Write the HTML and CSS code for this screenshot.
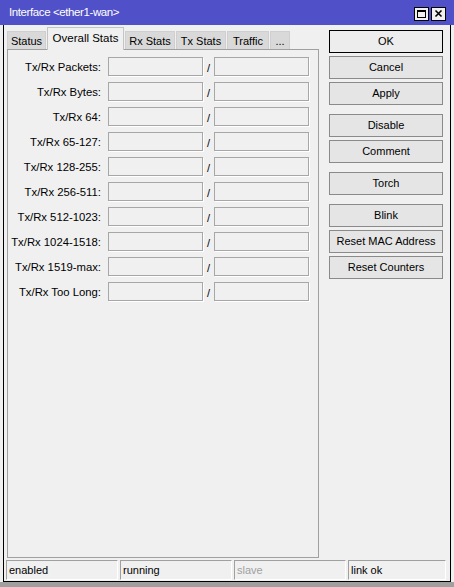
FILE: index.html
```html
<!DOCTYPE html>
<html>
	<head>
		<meta charset="utf-8">
		<title>Interface &lt;ether1-wan&gt;</title>
		<link rel="stylesheet" href="styles.css">
	</head>
	<body>
		<div id="win">
			<div class="titlebar">
				<span class="title">Interface &lt;ether1-wan&gt;</span>
				<div class="tbtns">
					<span class="tbtn">
						<svg width="13" height="12" viewBox="0 0 13 12"><rect x="2.5" y="2.5" width="8" height="7" fill="none" stroke="#000" stroke-width="1"/><rect x="2" y="2" width="9" height="2" fill="#000"/></svg>
					</span>
					<span class="tbtn">
						<svg width="13" height="12" viewBox="0 0 13 12"><path d="M3.5 2.5 L9.5 8.5 M9.5 2.5 L3.5 8.5" stroke="#000" stroke-width="1.6" fill="none"/></svg>
					</span>
				</div>
			</div>
			<div class="frame">
				<div class="main">
					<div class="left">
						<div class="tabs">
							<div class="tab t-status">Status</div>
							<div class="tab t-overall active">Overall Stats</div>
							<div class="tab t-rx">Rx Stats</div>
							<div class="tab t-tx">Tx Stats</div>
							<div class="tab t-traffic">Traffic</div>
							<div class="tab t-more">...</div>
						</div>
						<div class="panel">
							<div class="row"><span class="lbl">Tx/Rx Packets:</span><span class="field"></span><span class="slash">/</span><span class="field"></span></div>
							<div class="row"><span class="lbl">Tx/Rx Bytes:</span><span class="field"></span><span class="slash">/</span><span class="field"></span></div>
							<div class="row"><span class="lbl">Tx/Rx 64:</span><span class="field"></span><span class="slash">/</span><span class="field"></span></div>
							<div class="row"><span class="lbl">Tx/Rx 65-127:</span><span class="field"></span><span class="slash">/</span><span class="field"></span></div>
							<div class="row"><span class="lbl">Tx/Rx 128-255:</span><span class="field"></span><span class="slash">/</span><span class="field"></span></div>
							<div class="row"><span class="lbl">Tx/Rx 256-511:</span><span class="field"></span><span class="slash">/</span><span class="field"></span></div>
							<div class="row"><span class="lbl">Tx/Rx 512-1023:</span><span class="field"></span><span class="slash">/</span><span class="field"></span></div>
							<div class="row"><span class="lbl">Tx/Rx 1024-1518:</span><span class="field"></span><span class="slash">/</span><span class="field"></span></div>
							<div class="row"><span class="lbl">Tx/Rx 1519-max:</span><span class="field"></span><span class="slash">/</span><span class="field"></span></div>
							<div class="row"><span class="lbl">Tx/Rx Too Long:</span><span class="field"></span><span class="slash">/</span><span class="field"></span></div>
						</div>
					</div>
					<div class="buttons">
						<div class="btn default">OK</div>
						<div class="btn">Cancel</div>
						<div class="btn">Apply</div>
						<div class="btn sep">Disable</div>
						<div class="btn">Comment</div>
						<div class="btn sep">Torch</div>
						<div class="btn sep">Blink</div>
						<div class="btn">Reset MAC Address</div>
						<div class="btn">Reset Counters</div>
					</div>
				</div>
				<div class="statusbar">
					<div class="cell">enabled</div>
					<div class="cell">running</div>
					<div class="cell off">slave</div>
					<div class="cell last">link ok</div>
				</div>
			</div>
			<div class="bottom"></div>
		</div>
	</body>
</html>
```

FILE: styles.css
```css
html, body {
	margin: 0;
	padding: 0;
}

body {
	width: 454px;
	height: 587px;
	overflow: hidden;
	background: #f0f0f0;
	font-family: "Liberation Sans", Arial, sans-serif;
	font-size: 11px;
	color: #000;
}

.titlebar {
	height: 25px;
	background: #5050c8;
	display: flex;
	align-items: center;
	justify-content: space-between;
	padding: 0 8px 0 9px;
}

.title {
	color: #fff;
	font-size: 11.5px;
	letter-spacing: -0.4px;
	padding-bottom: 1px;
}

.tbtns {
	display: flex;
	gap: 2px;
	margin-top: 3px;
}

.tbtn {
	width: 13px;
	height: 12px;
	border: 1px solid #000;
	background: #f0f0f0;
	display: flex;
}

.frame {
	margin: 0 3px;
	border-left: 1px solid #000;
	border-right: 1px solid #000;
	border-bottom: 1px solid #000;
	box-sizing: border-box;
	height: 557px;
	padding-top: 2px;
	display: flex;
	flex-direction: column;
}

.main {
	display: flex;
	flex: 1;
}

.left {
	width: 312px;
	margin-left: 3px;
	display: flex;
	flex-direction: column;
}

.tabs {
	height: 22px;
	display: flex;
	align-items: flex-end;
	position: relative;
	z-index: 2;
}

.tab {
	height: 18px;
	line-height: 18px;
	background: #d9d9d9;
	border: 1px solid #cfcfcf;
	border-bottom: none;
	text-align: center;
	box-sizing: border-box;
	margin-right: 1px;
}

.tab.active {
	height: 23px;
	line-height: 20px;
	background: #f0f0f0;
	border-color: #c4c4c4;
	margin-bottom: -1px;
	font-size: 11.5px;
}

.t-status { width: 39px; }
.t-overall { width: 77px; }
.t-rx { width: 50px; }
.t-tx { width: 50px; }
.t-traffic { width: 42px; }
.t-more { width: 20px; }

.panel {
	flex: 1;
	border: 1px solid #a0a0a0;
	padding-top: 7px;
	display: flex;
	flex-direction: column;
	gap: 6px;
}

.row {
	display: flex;
	align-items: center;
	height: 19px;
}

.lbl {
	width: 93px;
	margin-right: 7px;
	text-align: right;
	white-space: nowrap;
	font-size: 11.3px;
}

.field {
	width: 95px;
	height: 19px;
	box-sizing: border-box;
	border: 1px solid #a7a7a7;
	background: #f0f0f0;
	box-shadow: 1px 1px 0 #fff;
}

.slash {
	width: 11px;
	text-align: center;
	padding-top: 2px;
}

.buttons {
	width: 114px;
	margin-left: 10px;
	margin-top: 3px;
	display: flex;
	flex-direction: column;
}

.btn {
	height: 23px;
	line-height: 21px;
	box-sizing: border-box;
	border: 1px solid #8a8a8a;
	background: #e5e5e5;
	text-align: center;
	margin-bottom: 3px;
	white-space: nowrap;
}

.btn.default {
	border-color: #000;
	background: #ededed;
}

.btn.sep {
	margin-top: 6px;
}

.statusbar {
	display: flex;
	height: 20px;
	margin-top: 2px;
	margin-left: 2px;
	margin-bottom: 1px;
	gap: 2px;
}

.cell {
	width: 112px;
	box-sizing: border-box;
	border-top: 1px solid #a0a0a0;
	border-left: 1px solid #a0a0a0;
	border-bottom: 1px solid #fff;
	border-right: 1px solid #fff;
	padding-left: 2px;
	line-height: 18px;
}

.cell.off {
	color: #a0a0a0;
}

.cell.last {
	width: 98px;
}

.bottom {
	height: 5px;
	background: #a0a0a0;
}
```
